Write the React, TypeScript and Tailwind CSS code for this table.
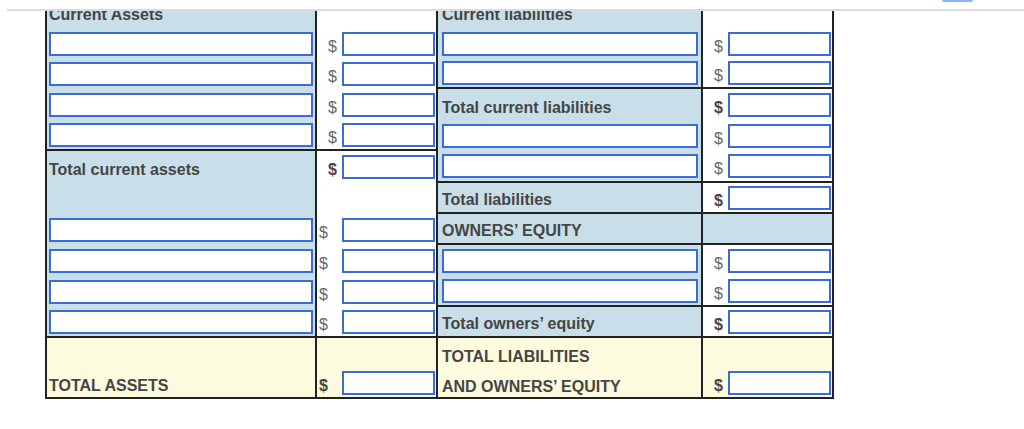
import React from "react";

type Bg = "blue" | "white" | "yellow";
const BG: Record<Bg, string> = {
  blue: "bg-[#c8dfe9]",
  white: "bg-white",
  yellow: "bg-[#fdfbde]",
};

type Kind =
  | { t: "label"; text: string; pb: string }
  | { t: "in1" }
  | { t: "in3" }
  | { t: "dr"; bold?: boolean; w: string }
  | { t: "dl"; bold?: boolean }
  | { t: "empty" };

type CellSpec = { col: 1 | 2 | 3 | 4; bg: Bg; bb?: boolean; k: Kind };

function Box({ w }: { w: string }) {
  return (
    <input
      type="text"
      aria-label="amount"
      className={`${w} h-[24px] shrink-0 border-2 border-[#3a6cd5] bg-white px-1 text-[14px] outline-none`}
    />
  );
}

function Dollar({ bold }: { bold?: boolean }) {
  return (
    <span
      className={
        bold
          ? "text-[16px] leading-[18px] font-bold text-[#454545]"
          : "text-[16px] leading-[18px] font-normal text-[#666]"
      }
    >
      $
    </span>
  );
}

function Cell({ spec }: { spec: CellSpec }) {
  const { col, bg, bb, k } = spec;
  const base = `flex min-w-0 border-r-2 border-[#222] ${BG[bg]} ${bb ? "border-b-2" : ""}`;
  if (k.t === "label") {
    const pl = col === 1 ? "pl-[2px]" : "pl-[4px]";
    return (
      <div className={`${base} items-end ${pl} ${k.pb}`}>
        <span className="whitespace-nowrap text-[16px] leading-[18px] font-bold text-[#454545]">{k.text}</span>
      </div>
    );
  }
  if (k.t === "in1") {
    return (
      <div className={`${base} items-center px-[2px]`}>
        <Box w="w-full" />
      </div>
    );
  }
  if (k.t === "in3") {
    return (
      <div className={`${base} items-center pl-[4px] pr-[3px]`}>
        <Box w="w-full" />
      </div>
    );
  }
  if (k.t === "dr") {
    return (
      <div className={`${base} items-center justify-end pr-[1px]`}>
        <div className="flex items-end gap-[5px]">
          <Dollar bold={k.bold} />
          <Box w={k.w} />
        </div>
      </div>
    );
  }
  if (k.t === "dl") {
    return (
      <div className={`${base} items-center pl-[2px] pr-[1px]`}>
        <div className="flex w-full items-end justify-between">
          <Dollar bold={k.bold} />
          <Box w="w-[93px]" />
        </div>
      </div>
    );
  }
  return <div className={base} />;
}

const W2 = "w-[93px]";
const W4 = "w-[103px]";

const rows: CellSpec[][] = [
  [
    { col: 1, bg: "blue", k: { t: "label", text: "Current Assets", pb: "pb-[4px]" } },
    { col: 2, bg: "white", k: { t: "empty" } },
    { col: 3, bg: "blue", k: { t: "label", text: "Current liabilities", pb: "pb-[4px]" } },
    { col: 4, bg: "white", k: { t: "empty" } },
  ],
  [
    { col: 1, bg: "blue", k: { t: "in1" } },
    { col: 2, bg: "white", k: { t: "dr", w: W2 } },
    { col: 3, bg: "blue", k: { t: "in3" } },
    { col: 4, bg: "white", k: { t: "dr", w: W4 } },
  ],
  [
    { col: 1, bg: "blue", k: { t: "in1" } },
    { col: 2, bg: "white", k: { t: "dr", w: W2 } },
    { col: 3, bg: "blue", bb: true, k: { t: "in3" } },
    { col: 4, bg: "white", bb: true, k: { t: "dr", w: W4 } },
  ],
  [
    { col: 1, bg: "blue", k: { t: "in1" } },
    { col: 2, bg: "white", k: { t: "dr", w: W2 } },
    { col: 3, bg: "blue", k: { t: "label", text: "Total current liabilities", pb: "pb-[3px]" } },
    { col: 4, bg: "white", k: { t: "dr", bold: true, w: W4 } },
  ],
  [
    { col: 1, bg: "blue", bb: true, k: { t: "in1" } },
    { col: 2, bg: "white", bb: true, k: { t: "dr", w: W2 } },
    { col: 3, bg: "blue", k: { t: "in3" } },
    { col: 4, bg: "white", k: { t: "dr", w: W4 } },
  ],
  [
    { col: 1, bg: "blue", k: { t: "label", text: "Total current assets", pb: "pb-[4px]" } },
    { col: 2, bg: "white", k: { t: "dr", bold: true, w: W2 } },
    { col: 3, bg: "blue", bb: true, k: { t: "in3" } },
    { col: 4, bg: "white", bb: true, k: { t: "dr", w: W4 } },
  ],
  [
    { col: 1, bg: "blue", k: { t: "empty" } },
    { col: 2, bg: "white", k: { t: "empty" } },
    { col: 3, bg: "blue", bb: true, k: { t: "label", text: "Total liabilities", pb: "pb-[3px]" } },
    { col: 4, bg: "white", bb: true, k: { t: "dr", bold: true, w: W4 } },
  ],
  [
    { col: 1, bg: "blue", k: { t: "in1" } },
    { col: 2, bg: "white", k: { t: "dl" } },
    { col: 3, bg: "blue", bb: true, k: { t: "label", text: "OWNERS\u2019 EQUITY", pb: "pb-[3px]" } },
    { col: 4, bg: "blue", bb: true, k: { t: "empty" } },
  ],
  [
    { col: 1, bg: "blue", k: { t: "in1" } },
    { col: 2, bg: "white", k: { t: "dl" } },
    { col: 3, bg: "blue", k: { t: "in3" } },
    { col: 4, bg: "white", k: { t: "dr", w: W4 } },
  ],
  [
    { col: 1, bg: "blue", k: { t: "in1" } },
    { col: 2, bg: "white", k: { t: "dl" } },
    { col: 3, bg: "blue", bb: true, k: { t: "in3" } },
    { col: 4, bg: "white", bb: true, k: { t: "dr", w: W4 } },
  ],
  [
    { col: 1, bg: "blue", bb: true, k: { t: "in1" } },
    { col: 2, bg: "white", bb: true, k: { t: "dl" } },
    { col: 3, bg: "blue", bb: true, k: { t: "label", text: "Total owners\u2019 equity", pb: "pb-[3px]" } },
    { col: 4, bg: "white", bb: true, k: { t: "dr", bold: true, w: W4 } },
  ],
  [
    { col: 1, bg: "yellow", k: { t: "empty" } },
    { col: 2, bg: "yellow", k: { t: "empty" } },
    { col: 3, bg: "yellow", k: { t: "label", text: "TOTAL LIABILITIES", pb: "pb-[2px]" } },
    { col: 4, bg: "yellow", k: { t: "empty" } },
  ],
  [
    { col: 1, bg: "yellow", bb: true, k: { t: "label", text: "TOTAL ASSETS", pb: "pb-[2px]" } },
    { col: 2, bg: "yellow", bb: true, k: { t: "dl", bold: true } },
    { col: 3, bg: "yellow", bb: true, k: { t: "label", text: "AND OWNERS\u2019 EQUITY", pb: "pb-[1px]" } },
    { col: 4, bg: "yellow", bb: true, k: { t: "dr", bold: true, w: W4 } },
  ],
];

export default function App() {
  return (
    <div className="relative h-[429px] w-[1024px] overflow-hidden bg-white font-['Liberation_Sans',Arial,sans-serif]">
      <div className="ml-[45px] inline-grid grid-cols-[270px_121px_265px_131px] grid-rows-[26px_31px_30px_31px_31px_32px_31px_31px_31px_31px_31px_30px_31px] border-l-2 border-t-2 border-[#222]">
        {rows.map((r, i) => r.map((c, j) => <Cell key={`${i}-${j}`} spec={c} />))}
      </div>
      <div className="absolute left-0 top-0 h-[9px] w-full bg-white">
        <div className="absolute left-[942px] top-0 h-[2px] w-[31px] rounded-b-[2px] bg-[#8ab4f8]" />
      </div>
      <div className="absolute left-[7px] right-0 top-[9px] h-[2px] bg-[#d8dbe2]" />
    </div>
  );
}
